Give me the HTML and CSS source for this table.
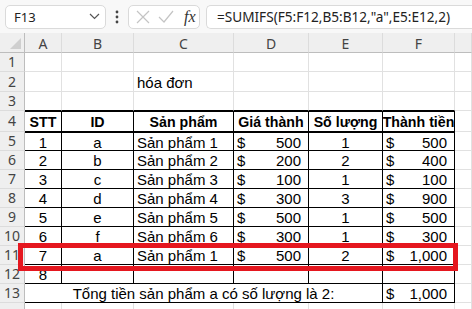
FILE: index.html
```html
<!DOCTYPE html>
<html lang="vi">
<head>
    <meta charset="UTF-8">
    <meta name="viewport" content="width=device-width, initial-scale=1.0">
    <title>hóa đơn</title>
    <link rel="stylesheet" href="styles.css">
</head>
<body>
    <div class="formula-bar">
        <div class="name-box">
            <span>F13</span>
            <svg class="chevron" width="11" height="7" viewBox="0 0 11 7"><polyline points="1,1 5.5,5.5 10,1" fill="none" stroke="#555" stroke-width="1.2"/></svg>
        </div>
        <svg class="dots" width="4" height="14" viewBox="0 0 4 14"><circle cx="2" cy="2" r="1.4" fill="#444"/><circle cx="2" cy="7" r="1.4" fill="#444"/><circle cx="2" cy="12" r="1.4" fill="#444"/></svg>
        <div class="fx-box">
            <svg width="14" height="14" viewBox="0 0 14 14"><path d="M1 1 L13 13 M13 1 L1 13" stroke="#c4c4c4" stroke-width="1.2"/></svg>
            <svg width="16" height="14" viewBox="0 0 16 14"><polyline points="1,7 6,12 15,1" fill="none" stroke="#c4c4c4" stroke-width="1.2"/></svg>
            <span class="fx">fx</span>
        </div>
        <div class="formula">=SUMIFS(F5:F12,B5:B12,"a",E5:E12,2)</div>
    </div>

    <div class="sheet">
        <!-- column headers -->
        <div class="corner"><span class="tri"></span></div>
        <div class="ch">A</div><div class="ch">B</div><div class="ch">C</div>
        <div class="ch">D</div><div class="ch">E</div><div class="ch">F</div><div class="ch"></div>

        <div class="rh">1</div>
        <div class="c"></div><div class="c"></div><div class="c"></div><div class="c"></div><div class="c"></div><div class="c"></div><div class="c"></div>

        <div class="rh">2</div>
        <div class="c"></div><div class="c"></div><div class="c left">hóa đơn</div><div class="c"></div><div class="c"></div><div class="c"></div><div class="c"></div>

        <div class="rh">3</div>
        <div class="c above"></div><div class="c above"></div><div class="c above"></div><div class="c above"></div><div class="c above"></div><div class="c above"></div><div class="c"></div>

        <div class="rh">4</div>
        <div class="c t hd">STT</div><div class="c t hd">ID</div><div class="c t hd">Sản phẩm</div>
        <div class="c t hd">Giá thành</div><div class="c t hd">Số lượng</div><div class="c t hd">Thành tiền</div><div class="c"></div>

        <div class="rh">5</div>
        <div class="c t first">1</div><div class="c t first">a</div><div class="c t first left">Sản phẩm 1</div>
        <div class="c t first money"><span>$</span><span>500</span></div><div class="c t first">1</div>
        <div class="c t first money"><span>$</span><span>500</span></div><div class="c"></div>

        <div class="rh">6</div>
        <div class="c t">2</div><div class="c t">b</div><div class="c t left">Sản phẩm 2</div>
        <div class="c t money"><span>$</span><span>200</span></div><div class="c t">2</div>
        <div class="c t money"><span>$</span><span>400</span></div><div class="c"></div>

        <div class="rh">7</div>
        <div class="c t">3</div><div class="c t">c</div><div class="c t left">Sản phẩm 3</div>
        <div class="c t money"><span>$</span><span>100</span></div><div class="c t">1</div>
        <div class="c t money"><span>$</span><span>100</span></div><div class="c"></div>

        <div class="rh">8</div>
        <div class="c t">4</div><div class="c t">d</div><div class="c t left">Sản phẩm 4</div>
        <div class="c t money"><span>$</span><span>300</span></div><div class="c t">3</div>
        <div class="c t money"><span>$</span><span>900</span></div><div class="c"></div>

        <div class="rh">9</div>
        <div class="c t">5</div><div class="c t">e</div><div class="c t left">Sản phẩm 5</div>
        <div class="c t money"><span>$</span><span>500</span></div><div class="c t">1</div>
        <div class="c t money"><span>$</span><span>500</span></div><div class="c"></div>

        <div class="rh">10</div>
        <div class="c t">6</div><div class="c t">f</div><div class="c t left">Sản phẩm 6</div>
        <div class="c t money"><span>$</span><span>300</span></div><div class="c t">1</div>
        <div class="c t money"><span>$</span><span>300</span></div><div class="c"></div>

        <div class="rh">11</div>
        <div class="c t">7</div><div class="c t">a</div><div class="c t left">Sản phẩm 1</div>
        <div class="c t money"><span>$</span><span>500</span></div><div class="c t">2</div>
        <div class="c t money"><span>$</span><span>1,000</span></div><div class="c"></div>

        <div class="rh">12</div>
        <div class="c t">8</div><div class="c t"></div><div class="c t"></div><div class="c t"></div><div class="c t"></div><div class="c t"></div><div class="c"></div>

        <div class="rh">13</div>
        <div class="c t total">Tổng tiền sản phẩm a có số lượng là 2:</div>
        <div class="c t money"><span>$</span><span>1,000</span></div><div class="c"></div>

        <div class="rh"></div>
        <div class="c"></div><div class="c"></div><div class="c"></div><div class="c"></div><div class="c"></div><div class="c"></div><div class="c"></div>
    </div>

    <div class="highlight"></div>
</body>
</html>
```

FILE: styles.css
```css
body {
    margin: 0;
    padding: 0;
    width: 472px;
    height: 309px;
    overflow: hidden;
    position: relative;
    background-color: #fff;
    font-family: "Liberation Sans", Arial, sans-serif;
}

/* name box + formula row */
.formula-bar {
    height: 33px;
    background-color: #f8f8f8;
    display: flex;
    align-items: center;
    padding: 0 0 0 5px;
    box-sizing: border-box;
    font-family: "Noto Sans", sans-serif;
    font-size: 13px;
    color: #222;
}
.name-box {
    width: 101px;
    height: 24px;
    box-sizing: border-box;
    background-color: #fff;
    border: 1px solid #dadada;
    border-radius: 5px;
    display: flex;
    align-items: center;
    justify-content: space-between;
    padding: 0 5px 0 8px;
}
.dots {
    margin: 0 9px 0 9px;
}
.fx-box {
    width: 72px;
    height: 24px;
    box-sizing: border-box;
    background-color: #fff;
    border: 1px solid #dadada;
    border-radius: 5px;
    display: flex;
    align-items: center;
    gap: 8px;
    padding: 0 0 0 7px;
}
.fx {
    font-family: "Liberation Serif", serif;
    font-style: italic;
    font-size: 16px;
    color: #333;
    margin-left: 2px;
}
.formula {
    flex: 1;
    height: 24px;
    margin-left: 6px;
    box-sizing: border-box;
    background-color: #fff;
    border: 1px solid #dadada;
    border-right: none;
    border-radius: 5px 0 0 5px;
    display: flex;
    align-items: center;
    padding-left: 10px;
    white-space: nowrap;
    font-size: 13.6px;
}

/* grid */
.sheet {
    display: grid;
    grid-template-columns: 25px 37px 72px 100px 75px 74px 72px 1fr;
    grid-template-rows: 20px 19px 20px 19px 21px repeat(9, 19px) 19px;
    font-size: 15px;
    color: #000;
}
.corner,
.ch,
.rh {
    background-color: #efefef;
    font-family: "Noto Sans", sans-serif;
    font-size: 14px;
    color: #444;
    box-sizing: border-box;
}
.corner {
    border-right: 1px solid #bdbdbd;
    border-bottom: 1px solid #bdbdbd;
    position: relative;
}
.tri {
    position: absolute;
    right: 3px;
    bottom: 3px;
    width: 0;
    height: 0;
    border-left: 11px solid transparent;
    border-bottom: 11px solid #cfcfcf;
}
.ch {
    border-right: 1px solid #dcdcdc;
    border-bottom: 1px solid #bdbdbd;
    display: flex;
    align-items: center;
    justify-content: center;
    padding-top: 1px;
}
.rh {
    border-right: 1px solid #bdbdbd;
    border-bottom: 1px solid #dcdcdc;
    display: flex;
    align-items: center;
    justify-content: center;
    line-height: 1;
}
.c {
    box-sizing: border-box;
    border-right: 1px solid #e1e1e1;
    border-bottom: 1px solid #e1e1e1;
    display: flex;
    align-items: center;
    justify-content: center;
    white-space: nowrap;
    line-height: 1;
    padding-top: 1px;
}
.c.left {
    justify-content: flex-start;
    padding-left: 3px;
}
.c.above {
    border-bottom-color: #000;
}
.c.t {
    border-right-color: #000;
    border-bottom-color: #000;
}
.c.hd {
    font-weight: bold;
    font-size: 14.2px;
    border-top: 1px solid #000;
}
.c.first {
    border-top: 1px solid #000;
}
.c.money {
    justify-content: space-between;
    padding: 1px 7px 0 3px;
}
.c.total {
    grid-column: span 5;
}

/* red box around row 11 */
.highlight {
    position: absolute;
    left: 18px;
    top: 243px;
    width: 440px;
    height: 28px;
    box-sizing: border-box;
    border: 5px solid #e5171f;
}
```
